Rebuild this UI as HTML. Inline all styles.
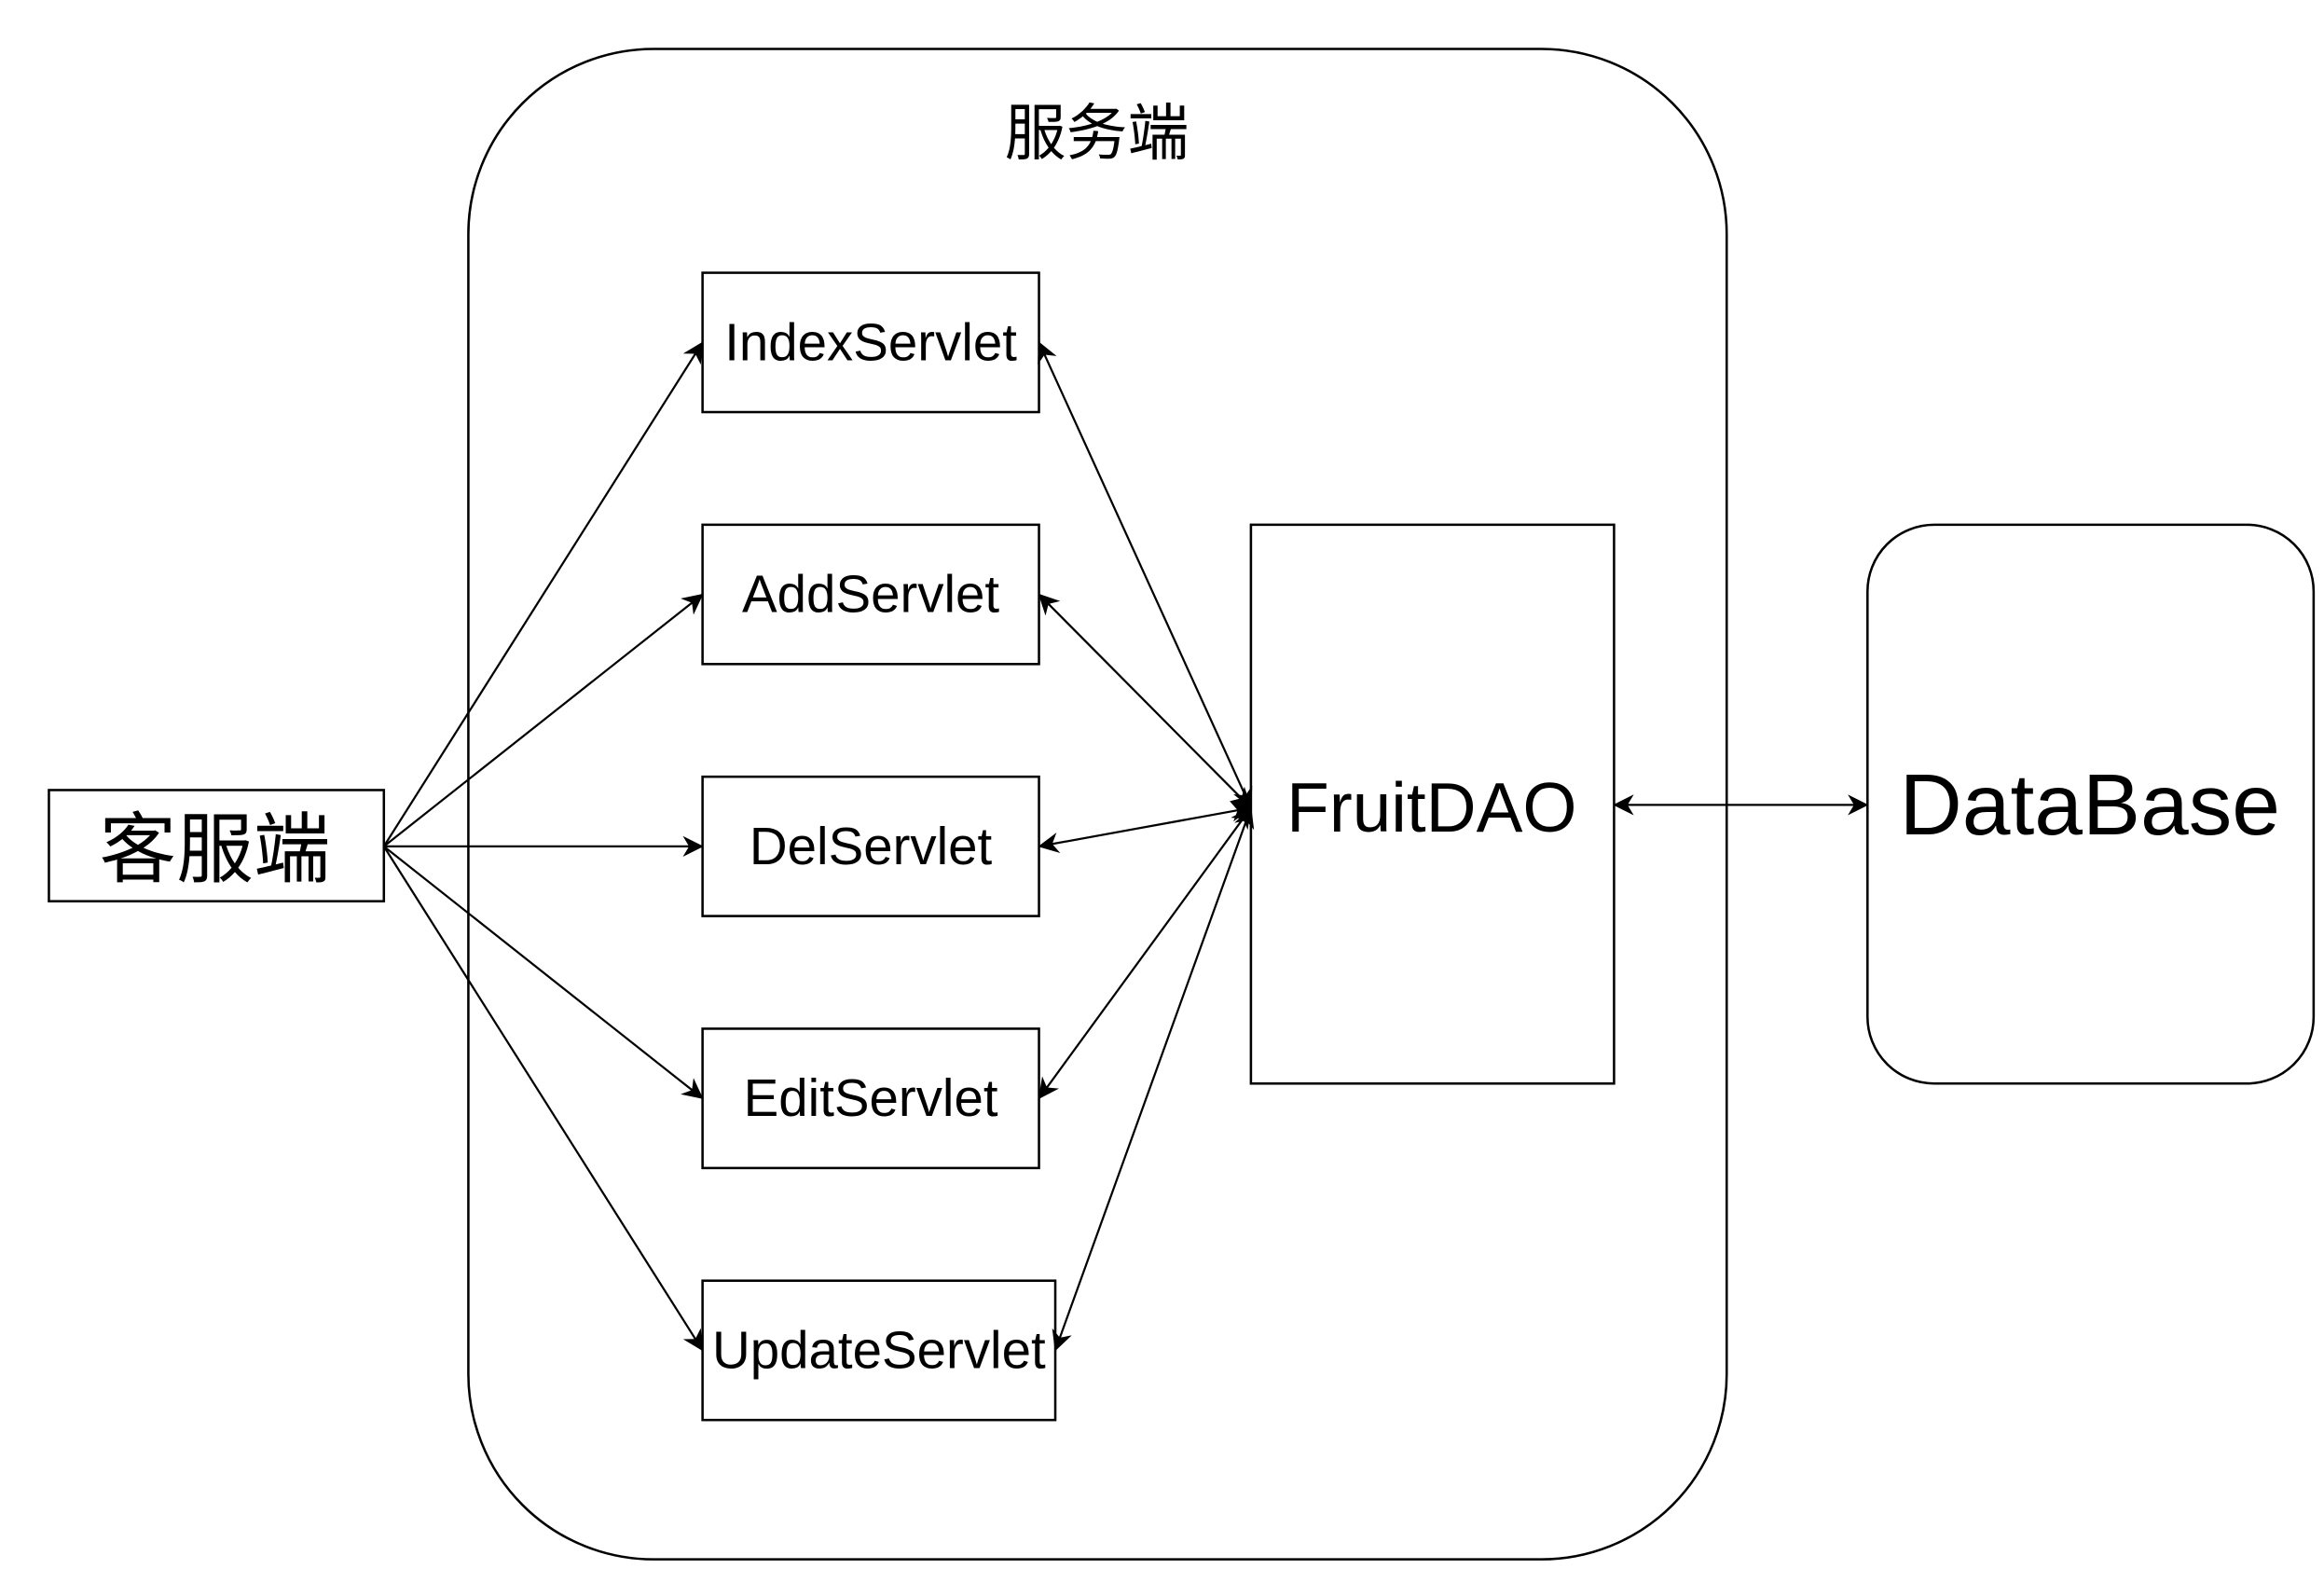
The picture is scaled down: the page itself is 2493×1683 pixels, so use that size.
<!DOCTYPE html>
<html><head><meta charset="utf-8"><style>
html,body{margin:0;padding:0;background:#fff;width:2493px;height:1683px;overflow:hidden}
svg{display:block}
text{font-family:"Liberation Sans","Noto Sans CJK SC",sans-serif;fill:#000}
</style></head><body>
<svg width="2493" height="1683" viewBox="0 0 1568 1058.5" xmlns="http://www.w3.org/2000/svg">
<defs>
<marker id="b" viewBox="0 0 10 10" refX="9.5" refY="5" markerWidth="14" markerHeight="14" markerUnits="userSpaceOnUse" orient="auto-start-reverse">
<path d="M0,0 L10,5 L0,10 L3,5 Z" fill="#000"/>
</marker>
</defs>
<g fill="none" stroke="#000" stroke-width="1.6">
<rect x="316" y="33" width="849" height="1019" rx="125"/>
<rect x="474" y="184" width="227" height="94"/>
<rect x="474" y="354" width="227" height="94"/>
<rect x="474" y="524" width="227" height="94"/>
<rect x="474" y="694" width="227" height="94"/>
<rect x="474" y="864" width="238" height="94"/>
<rect x="33" y="533" width="226" height="75"/>
<rect x="844" y="354" width="245" height="377"/>
<rect x="1260" y="354" width="301" height="377" rx="45"/>
</g>
<g stroke="#000" stroke-width="1.4" fill="none">
<line x1="259" y1="571" x2="474" y2="231" marker-end="url(#b)"/>
<line x1="259" y1="571" x2="474" y2="401" marker-end="url(#b)"/>
<line x1="259" y1="571" x2="474" y2="571" marker-end="url(#b)"/>
<line x1="259" y1="571" x2="474" y2="741" marker-end="url(#b)"/>
<line x1="259" y1="571" x2="474" y2="911" marker-end="url(#b)"/>
<line x1="701" y1="231" x2="844" y2="545" marker-start="url(#b)" marker-end="url(#b)"/>
<line x1="701" y1="401" x2="844" y2="545" marker-start="url(#b)" marker-end="url(#b)"/>
<line x1="701" y1="571" x2="844" y2="545" marker-start="url(#b)" marker-end="url(#b)"/>
<line x1="701" y1="741" x2="844" y2="545" marker-start="url(#b)" marker-end="url(#b)"/>
<line x1="712" y1="911" x2="844" y2="545" marker-start="url(#b)" marker-end="url(#b)"/>
<line x1="1089" y1="543" x2="1260" y2="543" marker-start="url(#b)" marker-end="url(#b)"/>
</g>
<g text-anchor="middle">
<text x="740" y="104" font-size="41.5">服务端</text>
<text x="587.5" y="243" font-size="35.5">IndexServlet</text>
<text x="587.5" y="413" font-size="35.5">AddServlet</text>
<text x="587.5" y="583" font-size="35.5">DelServlet</text>
<text x="587.5" y="753" font-size="35.5">EditServlet</text>
<text x="593" y="923" font-size="35.5">UpdateServlet</text>
<text x="145" y="591" font-size="52">客服端</text>
<text x="966" y="561" font-size="47">FruitDAO</text>
<text x="1410" y="563" font-size="58.5">DataBase</text>
</g>
</svg>
</body></html>
